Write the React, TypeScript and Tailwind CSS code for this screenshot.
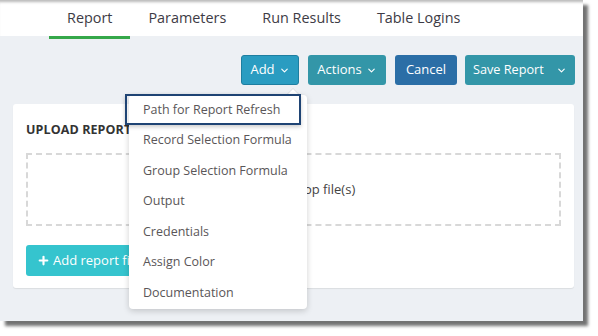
import { ChevronDown, Plus } from "lucide-react";

const tabs = ["Report", "Parameters", "Run Results", "Table Logins"];

const menuItems = [
  "Path for Report Refresh",
  "Record Selection Formula",
  "Group Selection Formula",
  "Output",
  "Credentials",
  "Assign Color",
  "Documentation",
];

export default function App() {
  return (
    <div
      className="relative w-[598px] h-[336px] overflow-hidden bg-white"
      style={{ fontFamily: '"Open Sans", "Liberation Sans", sans-serif' }}
    >
      <div className="relative flex flex-col w-[583px] h-[321px] bg-[#edf0f4] shadow-[5px_5px_3px_rgba(0,0,0,0.55)]">
        {/* tabs */}
        <nav className="flex h-[36px] shrink-0 bg-white pl-[49px] shadow-[inset_0_4px_3px_-2px_rgba(0,0,0,0.28)]">
          {tabs.map((t, i) => (
            <div key={t} className="relative flex items-center px-[18px] text-[14.4px] text-[#3d3b45]">
              {t}
              {i === 0 && <span className="absolute left-0 right-0 -bottom-[3px] h-[3px] bg-[#35a84a]" />}
            </div>
          ))}
        </nav>

        {/* toolbar */}
        <div className="flex justify-end gap-[9px] pr-[8px] pt-[19px] text-[13px] text-white">
          <button className="flex items-center gap-1 h-[30px] w-[58px] justify-center rounded-[3px] bg-[#2a9cc1] border border-[#1e7ea0]">
            Add <ChevronDown size={11} strokeWidth={2.5} />
          </button>
          <button className="flex items-center gap-1 h-[30px] w-[78px] justify-center rounded-[3px] bg-[#3396a8]">
            Actions <ChevronDown size={11} strokeWidth={2.5} />
          </button>
          <button className="flex items-center h-[30px] w-[62px] justify-center rounded-[3px] bg-[#2b6ea6]">
            Cancel
          </button>
          <div className="flex h-[30px] w-[110px] rounded-[3px] bg-[#3396a8] ml-[-1px]">
            <span className="flex items-center pl-[8px] flex-1 text-[12.7px]">Save Report</span>
            <span className="flex items-center justify-center w-[28px]">
              <ChevronDown size={11} strokeWidth={2.5} />
            </span>
          </div>
        </div>

        {/* card */}
        <div className="ml-[13px] mr-[9px] mt-[19px] rounded-[3px] bg-white px-[13px] pt-[17px] pb-[12px] shadow-[0_1px_1px_rgba(0,0,0,0.08)]">
          <h3 className="text-[12.5px] font-bold text-[#333] tracking-[0.1px] leading-[17px]">UPLOAD REPORT</h3>
          <div className="mt-[15px] flex h-[73px] items-center justify-center border-2 border-dashed border-[#d8d8d8] text-[13px] text-[#444]">
            Drag and drop file(s)
          </div>
          <button className="mt-[19px] flex items-center gap-[3px] h-[31px] rounded-[3px] bg-[#35c4ce] pl-[11px] pr-[12px] text-[13px] text-white">
            <Plus size={13} strokeWidth={4} />
            Add report file(s)
          </button>
        </div>
      </div>

      {/* dropdown */}
      <div className="absolute left-[287px] top-[89px] h-0 w-0 border-x-[6px] border-b-[6px] border-x-transparent border-b-white drop-shadow-[0_-1px_0_rgba(0,0,0,0.08)]" />
      <div className="absolute left-[129px] top-[95px] w-[178px] rounded-[4px] bg-white shadow-[0_2px_6px_rgba(0,0,0,0.18)]">
        {menuItems.map((m) => (
          <div key={m} className="flex h-[30.5px] items-center pl-[14px] text-[12.5px] text-[#5a5658]">
            {m}
          </div>
        ))}
      </div>
      <div className="absolute left-[125px] top-[94px] w-[176px] h-[31px] border-2 border-[#1f4474] shadow-[0_2px_4px_rgba(0,0,0,0.2)]" />
    </div>
  );
}
